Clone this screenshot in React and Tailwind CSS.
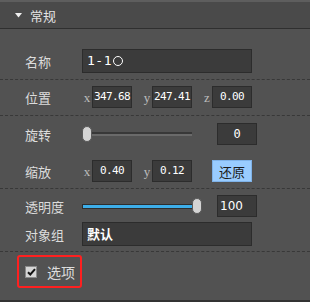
const cjk = { fontFamily: '"Noto Sans CJK SC", "Noto Sans", sans-serif' }
const mono = { fontFamily: '"DejaVu Sans Mono", "Liberation Mono", monospace' }
const serif = { fontFamily: '"Liberation Serif", serif' }

function Label({ children }) {
    return <span className="w-[82px] shrink-0 pl-[25px] text-[13px] leading-none text-[#dcdcdc] whitespace-nowrap" style={cjk}>{children}</span>
}

function Axis({ name, value, className = '' }) {
    return (
        <div className={`flex items-center ${className}`}>
            <span className="w-[10px] text-center text-[13px] leading-none text-[#bdbdbd]" style={serif}>{name}</span>
            <div className="w-[40px] h-[22px] bg-[#3b3b3b] border border-[#2c2c2c] flex items-center justify-center text-[11px] tracking-[-0.6px] text-white" style={mono}>{value}</div>
        </div>
    )
}

function Thumb() {
    return <div className="w-[10px] h-[16px] rounded-[5px] bg-[#d4d4d4] border border-[#5a5a5a]" />
}

export default function App() {
    return (
        <div className="w-[310px] h-[302px] bg-[#525252] flex flex-col overflow-hidden select-none" style={cjk}>

            {/* header */}
            <div className="h-[29px] shrink-0 bg-[#4a4a4a] border-t-2 border-t-[#5e5e5e] border-b border-b-[#2f2f2f] flex items-center pl-[15px] gap-[8px]">
                <svg width="7" height="5" viewBox="0 0 7 5"><path d="M0 0h7L3.5 4.5z" fill="#f0f0f0" /></svg>
                <span className="text-[13px] leading-none text-[#e4e4e4]">常规</span>
            </div>

            {/* name */}
            <div className="shrink-0 pt-[20px] pb-[6px] border-b border-dashed border-b-[#383838] flex items-center">
                <Label>名称</Label>
                <div className="w-[170px] h-[24px] bg-[#3b3b3b] border border-[#2c2c2c] flex items-center pl-[4px] text-[13px] tracking-[0.5px] text-white" style={mono}>
                    1-1<span className="ml-[1px] w-[10px] h-[10px] rounded-full border border-white" />
                </div>
            </div>

            {/* position */}
            <div className="shrink-0 pt-[6px] pb-[7px] border-b border-dashed border-b-[#383838] flex items-center">
                <Label>位置</Label>
                <Axis name="x" value="347.68" />
                <Axis name="y" value="247.41" className="ml-[10px]" />
                <Axis name="z" value="0.00" className="ml-[10px]" />
            </div>

            {/* rotation + scale */}
            <div className="shrink-0 pt-[7px] pb-[6px] border-b border-dashed border-b-[#383838] flex flex-col gap-[15px]">
                <div className="flex items-center">
                    <Label>旋转</Label>
                    <div className="w-[110px] flex items-center relative">
                        <div className="absolute left-[8px] right-0 h-[4px] border-t-2 border-t-[#383838] bg-[#6a6a6a]" />
                        <div className="relative"><Thumb /></div>
                    </div>
                    <div className="ml-[25px] w-[40px] h-[22px] bg-[#3b3b3b] border border-[#2c2c2c] flex items-center justify-center text-[12px] text-white" style={mono}>0</div>
                </div>
                <div className="flex items-center">
                    <Label>缩放</Label>
                    <Axis name="x" value="0.40" />
                    <Axis name="y" value="0.12" className="ml-[10px]" />
                    <button className="ml-[20px] w-[40px] h-[22px] bg-[#99ccff] border border-[#7fb2e8] text-[13px] leading-none text-[#1c1c1c]" style={cjk}>还原</button>
                </div>
            </div>

            {/* opacity + group */}
            <div className="shrink-0 pt-[6px] pb-[5px] border-b border-dashed border-b-[#383838] flex flex-col gap-[5px]">
                <div className="flex items-center">
                    <Label>透明度</Label>
                    <div className="w-[120px] flex items-center relative">
                        <div className="absolute left-0 right-[4px] h-[5px] border border-[#2e2e2e] bg-[#3daee9]" />
                        <div className="relative ml-[110px]"><Thumb /></div>
                    </div>
                    <div className="ml-[15px] w-[40px] h-[22px] bg-[#3b3b3b] border border-[#2c2c2c] flex items-center pl-[2px] text-[12px] text-white" style={{ fontFamily: '"DejaVu Sans", sans-serif' }}>100</div>
                </div>
                <div className="flex items-center">
                    <Label>对象组</Label>
                    <div className="w-[170px] h-[24px] bg-[#3b3b3b] border border-[#2c2c2c] flex items-center pl-[4px] text-[13px] font-bold text-white">默认</div>
                </div>
            </div>

            {/* checkbox */}
            <div className="flex-1 pt-[3px] pl-[17px] border-b-2 border-b-[#333333]">
                <label className="w-[65px] h-[33px] border-[2.5px] border-[#ff2020] rounded-[3px] flex items-center pl-[6px] gap-[10px]">
                    <span className="w-[12px] h-[12px] bg-[#d6d6d6] border border-[#8a8a8a] flex items-center justify-center">
                        <svg width="9" height="8" viewBox="0 0 9 8"><path d="M1 4.2l2.3 2.3L8 1.2" stroke="#111" strokeWidth="2" fill="none" /></svg>
                    </span>
                    <span className="text-[14px] leading-none text-[#dcdcdc]">选项</span>
                </label>
            </div>

        </div>
    )
}
